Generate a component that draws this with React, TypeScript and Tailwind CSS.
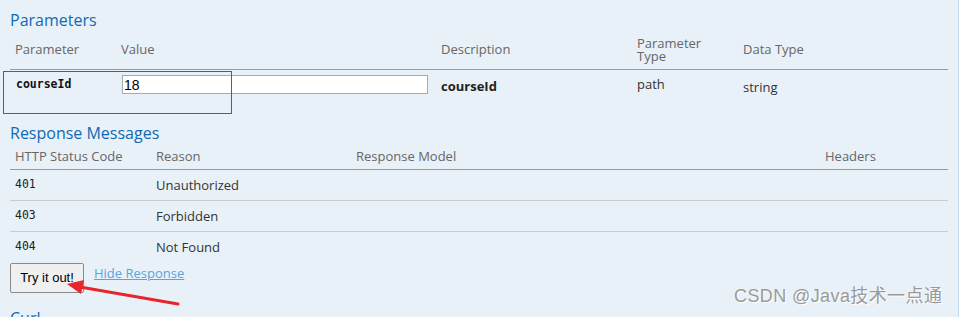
import React from "react";

const sans = { fontFamily: '"Open Sans", "Noto Sans", sans-serif' };
const mono = { fontFamily: '"DejaVu Sans Mono", "Liberation Mono", monospace' };

export default function App() {
  return (
    <div className="relative w-[959px] h-[317px] overflow-hidden bg-[#e9f1f8] border-r border-[#c3d9ec]" style={sans}>
      <div className="pl-[10px] pr-[10px]">
        <h4 className="pt-[10px] text-[16px] leading-[20px] text-[#0f6ab4]">Parameters</h4>
        <div className="grid grid-cols-[106px_320px_196px_106px_1fr] h-[40px] items-center border-b border-[#999] text-[13px] text-[#666]">
          <div className="pl-[5px] pt-[1px]">Parameter</div>
          <div className="pl-[5px] pt-[1px]">Value</div>
          <div className="pl-[5px] pt-[1px]">Description</div>
          <div className="pl-[5px] leading-[13px]">Parameter<br />Type</div>
          <div className="pl-[5px] pt-[1px]">Data Type</div>
        </div>
        <div className="grid grid-cols-[106px_320px_196px_106px_1fr] h-[40px] pt-[5px] items-start text-[13px] text-[#333]">
          <div className="pl-[6px] pt-[1px] leading-[16px] text-[11.5px] font-bold text-[#111]" style={mono}>courseId</div>
          <div className="pl-[6px]">
            <input
              readOnly
              value="18"
              className="w-[306px] h-[19px] border border-[#a9a9a9] bg-white px-[1px] text-[14px] leading-[17px] text-black outline-none"
              style={{ fontFamily: '"Liberation Sans", Arial, sans-serif' }}
            />
          </div>
          <div className="pl-[5px] leading-[20px] pt-[1px] font-bold text-[#222]">courseId</div>
          <div className="pl-[5px] leading-[18px]">path</div>
          <div className="pl-[5px] leading-[20px] pt-[2px]">string</div>
        </div>

        <h4 className="mt-[13px] text-[16px] leading-[20px] text-[#0f6ab4]">Response Messages</h4>
        <div className="grid grid-cols-[141px_200px_469px_1fr] h-[27px] items-center border-b border-[#999] text-[13px] text-[#666]">
          <div className="pl-[5px] pt-[2px]">HTTP Status Code</div>
          <div className="pl-[5px] pt-[2px]">Reason</div>
          <div className="pl-[5px] pt-[2px]">Response Model</div>
          <div className="pl-[5px] pt-[2px]">Headers</div>
        </div>
        {[
          ["401", "Unauthorized", true],
          ["403", "Forbidden", true],
          ["404", "Not Found", false],
        ].map(([code, reason, line]) => (
          <div
            key={code as string}
            className={`grid grid-cols-[141px_200px_469px_1fr] h-[31px] items-center text-[13px] text-[#333] ${line ? "border-b border-[#cccccc]" : ""}`}
          >
            <div className="pl-[5px] text-[11.5px] text-[#222] -mt-[1px]" style={mono}>{code}</div>
            <div className="pl-[5px] pt-[1px]">{reason}</div>
            <div />
            <div />
          </div>
        ))}
        <div className="flex items-start gap-[10px]">
          <button
            className="w-[74px] h-[30px] border border-[#8a8a8a] rounded-[2px] bg-[#f0f0f0] text-[13px] text-black"
            style={{ fontFamily: '"Liberation Sans", Arial, sans-serif' }}
          >
            Try it out!
          </button>
          <a className="mt-[1px] text-[13px] leading-[18px] text-[#5ba3dc] underline">Hide Response</a>
        </div>
        <h4 className="mt-[15px] text-[16px] leading-[20px] text-[#0f6ab4]">Curl</h4>
      </div>

      {/* annotation box */}
      <div className="absolute left-[3px] top-[71px] w-[229px] h-[43px] border border-[#d42a32]" />

      {/* annotation arrow */}
      <svg className="absolute left-0 top-0" width="959" height="317" viewBox="0 0 959 317">
        <line x1="178" y1="304" x2="80" y2="287" stroke="#e8252d" strokeWidth="3" strokeLinecap="round" />
        <polygon points="67,284 84,280 81,294" fill="#e8252d" />
      </svg>

      {/* watermark */}
      <div
        className="absolute left-[734px] top-[285px] text-[18px] leading-[22px] tracking-[0.4px] text-[#9a9a9a]"
        style={{ fontFamily: '"Liberation Sans", "Noto Sans CJK SC", sans-serif', textShadow: "1px 1px 0 #ffffff" }}
      >
        CSDN @Java技术一点通
      </div>
    </div>
  );
}
